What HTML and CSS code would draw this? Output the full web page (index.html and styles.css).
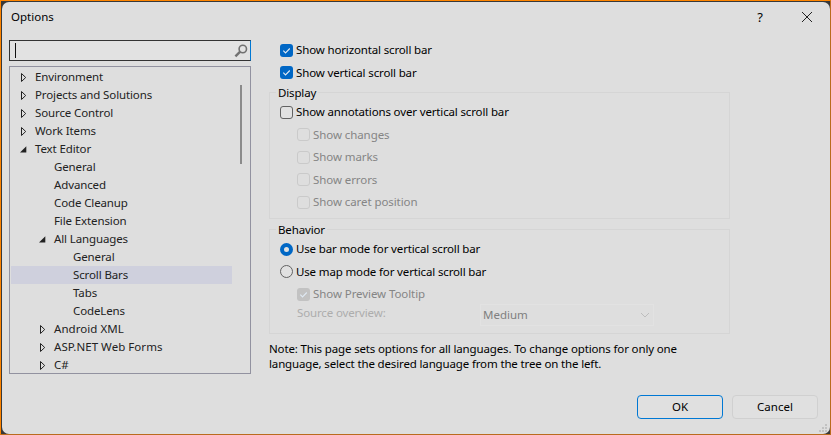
FILE: index.html
```html
<!DOCTYPE html>
<html lang="en">
<head>
<meta charset="utf-8">
<title>Options</title>
<link rel="stylesheet" href="styles.css">
</head>
<body>
<svg class="defs" width="0" height="0">
  <symbol id="closed" viewBox="0 0 7 9"><path d="M1.5 .5 5.7 4.5 1.5 8.5Z" fill="none" stroke="#222" stroke-width="1"/></symbol>
  <symbol id="open" viewBox="0 0 7 9"><path d="M6.3 1.2V7.5H0Z" fill="#222"/></symbol>
  <symbol id="tick" viewBox="0 0 13 13"><path d="M3.3 6.7 5.5 8.9 9.8 4.5" fill="none" stroke="#dfe9f3" stroke-width="1.1"/></symbol>
</svg>
<main class="frame">
<div class="dialog">
  <header class="titlebar">
    <h1 class="title">Options</h1>
    <span class="help">?</span>
    <svg class="close" width="12" height="12" viewBox="0 0 12 12"><path d="M1 1 11 11M11 1 1 11" stroke="#222" stroke-width="1" fill="none"/></svg>
  </header>
  <div class="body">
    <aside class="side">
      <div class="search"><i class="caret"></i>
        <svg width="14" height="14" viewBox="0 0 14 14"><circle cx="8.8" cy="5" r="3.7" fill="none" stroke="#717171" stroke-width="1.6"/><path d="M6.2 7.7 1.4 12.4" stroke="#717171" stroke-width="2.4"/></svg>
      </div>
      <div class="tree">
        <ul class="rows">
          <li><svg><use href="#closed"/></svg><span>Environment</span></li>
          <li><svg><use href="#closed"/></svg><span>Projects and Solutions</span></li>
          <li><svg><use href="#closed"/></svg><span>Source Control</span></li>
          <li><svg><use href="#closed"/></svg><span>Work Items</span></li>
          <li><svg><use href="#open"/></svg><span>Text Editor</span></li>
          <li class="l2"><svg></svg><span>General</span></li>
          <li class="l2"><svg></svg><span>Advanced</span></li>
          <li class="l2"><svg></svg><span>Code Cleanup</span></li>
          <li class="l2"><svg></svg><span>File Extension</span></li>
          <li class="l2"><svg><use href="#open"/></svg><span>All Languages</span></li>
          <li class="l3"><svg></svg><span>General</span></li>
          <li class="l3 selected"><svg></svg><span>Scroll Bars</span></li>
          <li class="l3"><svg></svg><span>Tabs</span></li>
          <li class="l3"><svg></svg><span>CodeLens</span></li>
          <li class="l2 caps"><svg><use href="#closed"/></svg><span>Android XML</span></li>
          <li class="l2 caps"><svg><use href="#closed"/></svg><span>ASP.NET Web Forms</span></li>
          <li class="l2 caps"><svg><use href="#closed"/></svg><span>C#</span></li>
        </ul>
        <i class="thumb"></i>
      </div>
    </aside>
    <section class="page">
      <div class="top">
        <label class="opt"><svg class="box on"><use href="#tick"/></svg><span>Show horizontal scroll bar</span></label>
        <label class="opt"><svg class="box on"><use href="#tick"/></svg><span>Show vertical scroll bar</span></label>
      </div>
      <div class="group display">
        <h2><span>Display</span></h2>
        <label class="opt"><svg class="box"></svg><span>Show annotations over vertical scroll bar</span></label>
        <label class="opt off"><svg class="box"></svg><span>Show changes</span></label>
        <label class="opt off"><svg class="box"></svg><span>Show marks</span></label>
        <label class="opt off"><svg class="box"></svg><span>Show errors</span></label>
        <label class="opt off"><svg class="box"></svg><span>Show caret position</span></label>
      </div>
      <div class="group behavior">
        <h2><span>Behavior</span></h2>
        <label class="opt"><i class="radio picked"></i><span>Use bar mode for vertical scroll bar</span></label>
        <label class="opt"><i class="radio"></i><span>Use map mode for vertical scroll bar</span></label>
        <label class="opt off"><svg class="box on"><use href="#tick"/></svg><span>Show Preview Tooltip</span></label>
        <div class="source"><span class="source-label">Source overview:</span>
          <div class="select"><span>Medium</span><svg width="10" height="6" viewBox="0 0 10 6"><path d="M1 1 5 5 9 1" fill="none" stroke="#bdbdbd"/></svg></div>
        </div>
      </div>
      <p class="note">Note: This page sets options for all languages. To change options for only one<br>language, select the desired language from the tree on the left.</p>
    </section>
  </div>
  <footer class="actions">
    <button class="primary">OK</button>
    <button>Cancel</button>
  </footer>
  <svg class="grip" width="8" height="8" viewBox="0 0 8 8" fill="#c2c2c2"><path d="M6 0h2v2H6zM3 3h2v2H3zM6 3h2v2H6zM0 6h2v2H0zM3 6h2v2H3zM6 6h2v2H6z"/></svg>
</div>
</main>
</body>
</html>
```

FILE: styles.css
```css
* { box-sizing: border-box; }
body { margin: 0; font: 11.5px/18px "Noto Sans", "Open Sans", sans-serif; color: #000; background: #222; }
.defs { position: absolute; }
.frame { width: 831px; height: 435px; border: 1px solid #ff8500; border-right-color: #b96b1d; border-bottom-color: #b96b1d; background: #383838; padding: 1px 0 0 1px; }
.dialog { position: relative; width: 828px; height: 432px; border-radius: 7px; background: #dedede; display: flex; flex-direction: column; }
.titlebar { height: 38px; display: flex; align-items: center; padding: 0 17px 9px 9px; }
.title { margin: 0; font-size: 11.5px; font-weight: 400; flex: 1; line-height: 18px; }
.help { font-size: 13px; margin-right: 38px; }
.body { display: flex; gap: 18px; padding-left: 7px; height: 334px; }
.side { width: 242px; }
.search { height: 21px; border: 1px solid #333; border-right-color: #0078d4; background: #e2e2e2; display: flex; align-items: center; justify-content: space-between; padding: 0 2px 0 5px; margin-bottom: 5px; }
.caret { width: 1px; height: 15px; background: #111; }
.tree { height: 308px; border: 1px solid #9292a0; padding: 1px; display: flex; overflow: hidden; }
.rows { list-style: none; margin: 0; padding: 0; width: 221px; color: #222; letter-spacing: -.12px; }
.rows li { height: 18px; padding-left: 9px; display: flex; align-items: center; white-space: nowrap; }
.rows svg { width: 7px; height: 9px; margin-right: 8px; flex: none; }
.rows .l2 { padding-left: 28px; }
.rows .l3 { padding-left: 47px; }
.rows .caps { letter-spacing: .05px; }
.rows .selected { background: #cfd0dd; }
.thumb { width: 2px; height: 79px; margin: 17px 0 0 8px; background: #8b8b8b; }
.page { width: 461px; letter-spacing: -.145px; }
.top { padding-left: 11px; height: 53px; margin-top: -1px; }
.opt { display: flex; align-items: center; height: 22.5px; gap: 3px; white-space: nowrap; }
.box { width: 13px; height: 13px; border: 1px solid #626262; border-radius: 3px; flex: none; background: #e1e1e1; }
.box.on { background: #0067c5; border: 0; }
.radio { width: 13px; height: 13px; border: 1px solid #626262; border-radius: 50%; flex: none; background: #e1e1e1; }
.radio.picked { border: 4px solid #0067c5; }
.off { padding-left: 17px; color: #858585; letter-spacing: -.08px; }
.off .box { border-color: #cacaca; background: #dedede; }
.off .box.on { background: #c2c2c2; }
.group { border: 1px solid #d5d5d5; padding-left: 10px; }
.group h2 { font-size: inherit; font-weight: 400; line-height: 16px; height: 8px; margin: 0 0 0 -4px; }
.group h2 span { display: block; width: max-content; padding: 0 2px; background: #dedede; position: relative; top: -8px; }
.display { height: 127px; }
.behavior { height: 105px; margin-top: 10px; }
.source { display: flex; align-items: center; height: 22px; padding-left: 17px; margin-top: -2px; }
.source-label { width: 183px; color: #adadad; line-height: 16px; margin-top: -3px; }
.select { width: 174px; flex: none; height: 22px; border: 1px solid #e2e2e2; display: flex; align-items: center; justify-content: space-between; padding: 0 3px 0 2px; color: #808080; letter-spacing: 0; }
.note { margin: 7px 0 0; line-height: 15px; white-space: nowrap; }
.actions { display: flex; justify-content: flex-end; gap: 9px; padding: 21px 12px 0 0; }
button { width: 86px; height: 24px; border: 1px solid #d0d0d0; border-radius: 4px; background: #e0e0e0; font: inherit; color: #000; padding: 0; }
.primary { border-color: #0078d4; }
.grip { position: absolute; right: 3px; bottom: 2px; }
```
